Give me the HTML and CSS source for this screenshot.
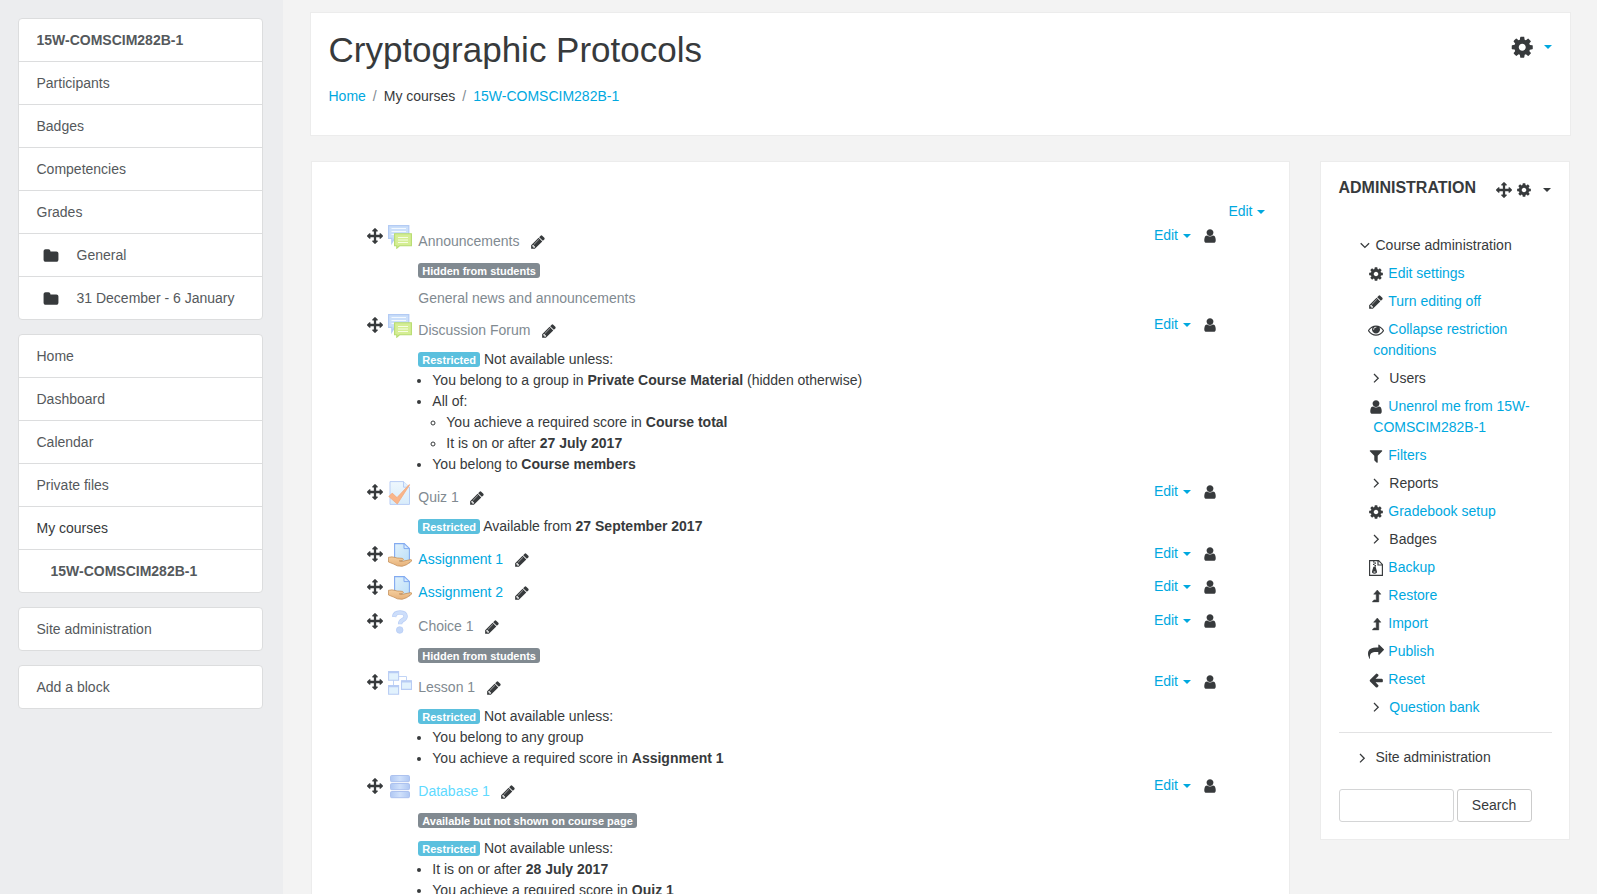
FILE: index.html
```html
<!DOCTYPE html>
<html lang="en">
<head>
  <meta charset="UTF-8">
  <title>Course: Cryptographic Protocols</title>
  <link rel="stylesheet" href="styles.css">
</head>
<body>

<!-- Icon sprite -->
<svg class="sprite" width="0" height="0">
  <defs>
    <linearGradient id="g-blue" x1="0" y1="0" x2="1" y2="1">
      <stop offset="0" stop-color="#e0f1fc"/>
      <stop offset="1" stop-color="#bcdff8"/>
    </linearGradient>
    <linearGradient id="g-pale" x1="0" y1="0" x2="0" y2="1">
      <stop offset="0" stop-color="#eef7fd"/>
      <stop offset="1" stop-color="#d8ecfb"/>
    </linearGradient>
    <linearGradient id="g-db" x1="0" y1="0" x2="1" y2="0">
      <stop offset="0" stop-color="#b0c8f3"/>
      <stop offset=".5" stop-color="#d0e1fb"/>
      <stop offset="1" stop-color="#b0c8f3"/>
    </linearGradient>
    <linearGradient id="g-hand" x1="0" y1="0" x2="0" y2="1">
      <stop offset="0" stop-color="#f5cf9f"/>
      <stop offset="1" stop-color="#e6b17a"/>
    </linearGradient>
  </defs>
  <symbol id="i-cog" viewBox="0 0 1792 1792"><path d="M1152 896q0-106-75-181t-181-75-181 75-75 181 75 181 181 75 181-75 75-181zm512-109v222q0 12-8 23t-20 13l-185 28q-19 54-39 91 35 50 107 138 10 12 10 25t-9 23q-27 37-99 108t-94 71q-12 0-26-9l-138-108q-44 23-91 38-16 136-29 186-7 28-36 28h-222q-14 0-24.5-8.5t-11.5-21.5l-28-184q-49-16-90-37l-141 107q-10 9-25 9-14 0-25-11-126-114-165-168-7-10-7-23 0-12 8-23 15-21 51-66.5t54-70.5q-27-50-41-99l-183-27q-13-2-21-12.5t-8-23.5v-222q0-12 8-23t19-13l186-28q14-46 39-92-40-57-107-138-10-12-10-24 0-10 9-23 26-36 98.5-107.5t94.5-71.5q13 0 26 10l138 107q44-23 91-38 16-136 29-186 7-28 36-28h222q14 0 24.5 8.5t11.5 21.5l28 184q49 16 90 37l142-107q9-9 24-9 13 0 25 10 129 119 165 170 7 8 7 22 0 12-8 23-15 21-51 66.5t-54 70.5q26 50 41 98l183 28q13 2 21 12.5t8 23.5z"/></symbol>
  <symbol id="i-move" viewBox="0 0 1792 1792"><path d="M1792 896q0 26-19 45l-256 256q-19 19-45 19t-45-19-19-45v-128h-384v384h128q26 0 45 19t19 45-19 45l-256 256q-19 19-45 19t-45-19l-256-256q-19-19-19-45t19-45 45-19h128v-384h-384v128q0 26-19 45t-45 19-45-19l-256-256q-19-19-19-45t19-45l256-256q19-19 45-19t45 19 19 45v128h384v-384h-128q-26 0-45-19t-19-45 19-45l256-256q19-19 45-19t45 19l256 256q19 19 19 45t-19 45-45 19h-128v384h384v-128q0-26 19-45t45-19 45 19l256 256q19 19 19 45z"/></symbol>
  <symbol id="i-pencil" viewBox="0 0 1792 1792"><path d="M491 1536l91-91-235-235-91 91v107h128v128h107zm523-928q0-22-22-22-10 0-17 7l-542 542q-7 7-7 17 0 22 22 22 10 0 17-7l542-542q7-7 7-17zm-54-192l416 416-832 832h-416v-416zm683 96q0 53-37 90l-166 166-416-416 166-165q36-38 90-38 53 0 91 38l235 234q37 39 37 91z"/></symbol>
  <symbol id="i-user" viewBox="0 0 1792 1792"><path d="M1536 1399q0 109-62.5 187t-150.5 78h-854q-88 0-150.5-78t-62.5-187q0-85 8.5-160.5t31.5-152 58.5-131 94-89 134.5-34.5q131 128 313 128t313-128q76 0 134.5 34.5t94 89 58.5 131 31.5 152 8.5 160.5zm-256-887q0 159-112.5 271.5t-271.5 112.5-271.5-112.5-112.5-271.5 112.5-271.5 271.5-112.5 271.5 112.5 112.5 271.5z"/></symbol>
  <symbol id="i-folder" viewBox="0 0 1792 1792"><path d="M1728 608v704q0 92-66 158t-158 66h-1216q-92 0-158-66t-66-158v-960q0-92 66-158t158-66h320q92 0 158 66t66 158v32h672q92 0 158 66t66 158z"/></symbol>
  <symbol id="i-eye" viewBox="0 0 1792 1792"><path d="M1664 960q-152-236-381-353 61 104 61 225 0 185-131.5 316.5t-316.5 131.5-316.5-131.5-131.5-316.5q0-121 61-225-229 117-381 353 133 205 333.5 326.5t434.5 121.5 434.5-121.5 333.5-326.5zm-720-384q0-20-14-34t-34-14q-125 0-214.5 89.5t-89.5 214.5q0 20 14 34t34 14 34-14 14-34q0-86 61-147t147-61q20 0 34-14t14-34zm848 384q0 34-20 69-140 230-376.5 368.5t-499.5 138.5-499.5-139-376.5-368q-20-35-20-69t20-69q140-229 376.5-368t499.5-139 499.5 139 376.5 368q20 35 20 69z"/></symbol>
  <symbol id="i-filter" viewBox="0 0 1792 1792"><path d="M1595 295q17 41-14 70l-493 493v742q0 42-39 59-13 5-25 5-27 0-45-19l-256-256q-19-19-19-45v-486l-493-493q-31-29-14-70 17-39 59-39h1280q42 0 59 39z"/></symbol>
  <symbol id="i-share" viewBox="0 0 1792 1792"><path d="M1792 640q0 26-19 45l-512 512q-19 19-45 19t-45-19-19-45v-256h-224q-98 0-175.5 6t-154 21.5-133 42.5-105.5 69.5-80 101-48.5 138.5-17.5 181q0 55 5 123 0 6 2.5 23.5t2.5 26.5q0 15-8.5 25t-23.5 10q-16 0-28-17-7-9-13-22t-13.5-30-10.5-24q-127-285-127-451 0-199 53-333 162-403 875-403h224v-256q0-26 19-45t45-19 45 19l512 512q19 19 19 45z"/></symbol>
  <symbol id="i-left" viewBox="0 0 1792 1792"><path d="M1664 896v128q0 53-32.5 90.5t-84.5 37.5h-704l293 294q38 36 38 90t-38 90l-75 76q-37 37-90 37-52 0-91-37l-651-652q-37-37-37-90 0-52 37-91l651-650q38-38 91-38 52 0 90 38l75 74q38 38 38 91t-38 91l-293 293h704q52 0 84.5 37.5t32.5 90.5z"/></symbol>
  <symbol id="i-up" viewBox="0 0 16 16"><path d="M9.300 2L12.900 6.200H10.800V13.900H4.300L5.900 11.900H8.200V6.200H5.700z" stroke="#373a3c" stroke-width=".5" stroke-linejoin="round"/></symbol>
  <symbol id="i-zip" viewBox="0 0 16 16"><path d="M1.600 .6h9l3.800 3.800v11h-12.800z M10 .8v4.200h4.400" fill="none" stroke="#373a3c" stroke-width="1.150"/><path d="M5 1.200h1.500v1.300H5zM6.500 2.500H8v1.300H6.500zM5 3.800h1.500v1.300H5zM6.500 5.100H8v1.300H6.500zM5.400 6.800h2.200l1.400 4.800q.3 2.100-2.500 2.100t-2.500-2.100zM5.600 11.500v1.100h1.800v-1.100z" fill-rule="evenodd"/></symbol>
  <symbol id="i-right" viewBox="0 0 16 16"><path d="M6 4l4.200 4.200L6 12.400" fill="none" stroke="#373a3c" stroke-width="1.300"/></symbol>
  <symbol id="i-down" viewBox="0 0 16 16"><path d="M3.700 5.200l4.200 4.200 4.200-4.200" fill="none" stroke="#373a3c" stroke-width="1.300"/></symbol>

  <!-- activity icons -->
  <symbol id="m-forum" viewBox="0 0 24 24">
    <path d="M.6.6h20.200v12.800H6.400v.1L3.800 18v-4.600H.6z" fill="#cbdffa" stroke="#b3cbf4" stroke-width="1.200"/>
    <path d="M3.500 3.500h14.500M3.500 6.500h14.500M3.500 9.500h4" stroke="#f3f9ff" stroke-width="1.200"/>
    <path d="M6.600 8.800h16.800v12H11.500L8.800 23.200v-2.400H6.600z" fill="#d5ee94" stroke="#b6dc70" stroke-width="1.100"/>
    <path d="M10 12.500h10M10 15h10M10 17.500h10" stroke="#f6fde3" stroke-width="1.100"/>
  </symbol>
  <symbol id="m-quiz" viewBox="0 0 24 24">
    <path d="M2 .6h13.500l6 5.600v17.200H2z" fill="url(#g-pale)" stroke="#b8cdf5" stroke-width="1"/>
    <path d="M15.500.6v5.600h6" fill="#e3f1fd" stroke="#b8cdf5"/>
    <path d="M.8 15.500l3.400-3.400 4.800 4.500L21.200 3.500l.4.4L9.300 23z" fill="#f9b58a" stroke="#f3a679" stroke-width=".7"/>
  </symbol>
  <symbol id="m-assign" viewBox="0 0 24 24">
    <path d="M6.600.6h9.600l5.200 5v14H6.600z" fill="url(#g-blue)" stroke="#82aaf0" stroke-width="1.100"/>
    <path d="M16 .6v5h5.400z" fill="#d6eafd" stroke="#82aaf0"/>
    <path d="M.5 14.300q3.500-.9 6.500.1 2 .8 4.300.7 3.900-.1 4.200 1.300 0 1.200-4.300 1.500l1.800.7 9.700-2q1.800.2.700 1.700-4.500 4-9.200 5-5 .3-8.500-2.200L.5 19z" fill="url(#g-hand)" stroke="#c08850" stroke-width=".7"/>
  </symbol>
  <symbol id="m-choice" viewBox="0 0 24 24">
    <path d="M6.100 6.900Q6.600 2.400 12 2.400q5.400.2 5.600 3.800 0 2.400-3.100 4-2.400 1.200-2.400 4" fill="none" stroke="#b9cef6" stroke-width="4.400"/>
    <path d="M6.300 6.400Q6.900 2.500 12 2.400q5.400.2 5.600 3.800 0 2.400-3.100 4-2.400 1.200-2.400 3.600" fill="none" stroke="#cddefa" stroke-width="3"/>
    <circle cx="11.700" cy="20" r="3.300" fill="#c4d7f8" stroke="#b9cef6" stroke-width=".8"/>
  </symbol>
  <symbol id="m-lesson" viewBox="0 0 24 24">
    <path d="M11 5.500h7.500V10M5.500 9v6" fill="none" stroke="#c1d4f6" stroke-width="1"/>
    <g fill="#e2f2fd" stroke="#b8ccf4" stroke-width="1.100">
      <path d="M.6.6h10v8.600H.6zM13.500 9.800h10v8.600h-10zM.6 14.600h10v8.600H.6z"/>
    </g>
    <path d="M.6 1.300h10M13.500 10.500h10M.6 15.300h10" stroke="#b8ccf4" stroke-width="1.800"/>
  </symbol>
  <symbol id="m-data" viewBox="0 0 24 24">
    <g fill="url(#g-db)" stroke="#adc2ef" stroke-width="1">
      <rect x="2.500" y=".5" width="19" height="6.200" rx="1.200"/>
      <rect x="2.500" y="8.500" width="19" height="6.200" rx="1.200"/>
      <rect x="2.500" y="16.500" width="19" height="6.200" rx="1.200"/>
    </g>
  </symbol>
</svg>

<div class="page">

  <!-- Nav drawer -->
  <nav class="drawer">
    <div class="list-group">
      <a class="list-item bold">15W-COMSCIM282B-1</a>
      <a class="list-item">Participants</a>
      <a class="list-item">Badges</a>
      <a class="list-item">Competencies</a>
      <a class="list-item">Grades</a>
      <a class="list-item with-icon"><svg class="icon"><use href="#i-folder"/></svg>General</a>
      <a class="list-item with-icon"><svg class="icon"><use href="#i-folder"/></svg>31 December - 6 January</a>
    </div>
    <div class="list-group">
      <a class="list-item">Home</a>
      <a class="list-item">Dashboard</a>
      <a class="list-item">Calendar</a>
      <a class="list-item">Private files</a>
      <div class="list-item dark">My courses</div>
      <a class="list-item bold indent">15W-COMSCIM282B-1</a>
    </div>
    <div class="list-group">
      <a class="list-item">Site administration</a>
    </div>
    <div class="list-group">
      <a class="list-item">Add a block</a>
    </div>
  </nav>

  <div class="content">

    <header class="card page-header">
      <div>
        <h1>Cryptographic Protocols</h1>
        <ol class="breadcrumb">
          <li><a class="link">Home</a></li>
          <li>My courses</li>
          <li><a class="link">15W-COMSCIM282B-1</a></li>
        </ol>
      </div>
      <div class="header-menu"><svg class="icon icon-lg"><use href="#i-cog"/></svg><span class="caret link"></span></div>
    </header>

    <div class="columns">

      <main class="card course">
        <div class="section-edit"><a class="link menu">Edit<span class="caret"></span></a></div>

        <div class="activity">
          <svg class="icon move"><use href="#i-move"/></svg>
          <svg class="mod-icon"><use href="#m-forum"/></svg>
          <div class="body">
            <div class="title dimmed">Announcements<svg class="icon"><use href="#i-pencil"/></svg></div>
            <div class="info"><span class="tag">Hidden from students</span></div>
            <div class="dimmed summary">General news and announcements</div>
          </div>
          <div class="actions"><a class="link menu">Edit<span class="caret"></span></a><svg class="icon"><use href="#i-user"/></svg></div>
        </div>

        <div class="activity">
          <svg class="icon move"><use href="#i-move"/></svg>
          <svg class="mod-icon"><use href="#m-forum"/></svg>
          <div class="body">
            <div class="title dimmed">Discussion Forum<svg class="icon"><use href="#i-pencil"/></svg></div>
            <div class="info"><span class="tag tag-info">Restricted</span> Not available unless:
              <ul>
                <li>You belong to a group in <strong>Private Course Material</strong> (hidden otherwise)</li>
                <li>All of:
                  <ul>
                    <li>You achieve a required score in <strong>Course total</strong></li>
                    <li>It is on or after <strong>27 July 2017</strong></li>
                  </ul>
                </li>
                <li>You belong to <strong>Course members</strong></li>
              </ul>
            </div>
          </div>
          <div class="actions"><a class="link menu">Edit<span class="caret"></span></a><svg class="icon"><use href="#i-user"/></svg></div>
        </div>

        <div class="activity">
          <svg class="icon move"><use href="#i-move"/></svg>
          <svg class="mod-icon"><use href="#m-quiz"/></svg>
          <div class="body">
            <div class="title dimmed">Quiz 1<svg class="icon"><use href="#i-pencil"/></svg></div>
            <div class="info"><span class="tag tag-info">Restricted</span> Available from <strong>27 September 2017</strong></div>
          </div>
          <div class="actions"><a class="link menu">Edit<span class="caret"></span></a><svg class="icon"><use href="#i-user"/></svg></div>
        </div>

        <div class="activity">
          <svg class="icon move"><use href="#i-move"/></svg>
          <svg class="mod-icon"><use href="#m-assign"/></svg>
          <div class="body">
            <div class="title link">Assignment 1<svg class="icon"><use href="#i-pencil"/></svg></div>
          </div>
          <div class="actions"><a class="link menu">Edit<span class="caret"></span></a><svg class="icon"><use href="#i-user"/></svg></div>
        </div>

        <div class="activity loose">
          <svg class="icon move"><use href="#i-move"/></svg>
          <svg class="mod-icon"><use href="#m-assign"/></svg>
          <div class="body">
            <div class="title link">Assignment 2<svg class="icon"><use href="#i-pencil"/></svg></div>
          </div>
          <div class="actions"><a class="link menu">Edit<span class="caret"></span></a><svg class="icon"><use href="#i-user"/></svg></div>
        </div>

        <div class="activity tight">
          <svg class="icon move"><use href="#i-move"/></svg>
          <svg class="mod-icon"><use href="#m-choice"/></svg>
          <div class="body">
            <div class="title dimmed">Choice 1<svg class="icon"><use href="#i-pencil"/></svg></div>
            <div class="info"><span class="tag">Hidden from students</span></div>
          </div>
          <div class="actions"><a class="link menu">Edit<span class="caret"></span></a><svg class="icon"><use href="#i-user"/></svg></div>
        </div>

        <div class="activity">
          <svg class="icon move"><use href="#i-move"/></svg>
          <svg class="mod-icon"><use href="#m-lesson"/></svg>
          <div class="body">
            <div class="title dimmed">Lesson 1<svg class="icon"><use href="#i-pencil"/></svg></div>
            <div class="info"><span class="tag tag-info">Restricted</span> Not available unless:
              <ul>
                <li>You belong to any group</li>
                <li>You achieve a required score in <strong>Assignment 1</strong></li>
              </ul>
            </div>
          </div>
          <div class="actions"><a class="link menu">Edit<span class="caret"></span></a><svg class="icon"><use href="#i-user"/></svg></div>
        </div>

        <div class="activity">
          <svg class="icon move"><use href="#i-move"/></svg>
          <svg class="mod-icon"><use href="#m-data"/></svg>
          <div class="body">
            <div class="title link-dimmed">Database 1<svg class="icon"><use href="#i-pencil"/></svg></div>
            <div class="info"><span class="tag">Available but not shown on course page</span></div>
            <div class="summary"><span class="tag tag-info">Restricted</span> Not available unless:
              <ul>
                <li>It is on or after <strong>28 July 2017</strong></li>
                <li>You achieve a required score in <strong>Quiz 1</strong></li>
              </ul>
            </div>
          </div>
          <div class="actions"><a class="link menu">Edit<span class="caret"></span></a><svg class="icon"><use href="#i-user"/></svg></div>
        </div>
      </main>

      <!-- Administration block -->
      <aside class="card block">
        <div class="block-head">
          <h2>Administration</h2>
          <div class="block-menu">
            <svg class="icon"><use href="#i-move"/></svg>
            <svg class="icon"><use href="#i-cog"/></svg>
            <span class="caret"></span>
          </div>
        </div>

        <div class="tree-root"><svg class="icon"><use href="#i-down"/></svg>Course administration</div>
        <ul class="tree">
          <li class="link"><svg class="icon"><use href="#i-cog"/></svg>Edit settings</li>
          <li class="link"><svg class="icon"><use href="#i-pencil"/></svg>Turn editing off</li>
          <li class="link"><svg class="icon"><use href="#i-eye"/></svg>Collapse restriction conditions</li>
          <li class="branch"><svg class="icon"><use href="#i-right"/></svg>Users</li>
          <li class="link"><svg class="icon"><use href="#i-user"/></svg>Unenrol me from 15W-COMSCIM282B-1</li>
          <li class="link"><svg class="icon"><use href="#i-filter"/></svg>Filters</li>
          <li class="branch"><svg class="icon"><use href="#i-right"/></svg>Reports</li>
          <li class="link"><svg class="icon"><use href="#i-cog"/></svg>Gradebook setup</li>
          <li class="branch"><svg class="icon"><use href="#i-right"/></svg>Badges</li>
          <li class="link"><svg class="icon"><use href="#i-zip"/></svg>Backup</li>
          <li class="link"><svg class="icon"><use href="#i-up"/></svg>Restore</li>
          <li class="link"><svg class="icon"><use href="#i-up"/></svg>Import</li>
          <li class="link"><svg class="icon"><use href="#i-share"/></svg>Publish</li>
          <li class="link"><svg class="icon"><use href="#i-left"/></svg>Reset</li>
          <li class="branch link"><svg class="icon"><use href="#i-right"/></svg>Question bank</li>
        </ul>
        <hr>
        <div class="tree-root site"><svg class="icon"><use href="#i-right"/></svg>Site administration</div>
        <form class="search">
          <input type="text">
          <button type="button">Search</button>
        </form>
      </aside>

    </div>
  </div>
</div>

</body>
</html>
```
FILE: styles.css
```css
* {
  box-sizing: border-box;
}

body {
  margin: 0;
  height: 894px;
  overflow: hidden;
  background: #f3f3f3;
  color: #373a3c;
  font-family: "Liberation Sans", Arial, sans-serif;
  font-size: 14px;
  line-height: 21px;
}

h1, h2, ul, ol {
  margin: 0;
  padding: 0;
}

.sprite {
  display: block;
}

.page {
  display: flex;
  height: 894px;
}

.link {
  color: #00a8df;
}

.link-dimmed {
  color: #60daff;
}

.dimmed {
  color: #818a91;
}

.icon {
  width: 16px;
  height: 16px;
  fill: #373a3c;
  flex: none;
}

.caret {
  display: inline-block;
  border: 4px solid transparent;
  border-top-color: currentColor;
  border-bottom: 0;
}

.card {
  background: #fff;
  border: 1px solid #ececec;
}

/* Nav drawer */
.drawer {
  flex: none;
  width: 283px;
  padding: 18px 20px 0 18px;
  background: #ecedef;
}

.list-group {
  margin-bottom: 14px;
  background: #fff;
  border: 1px solid #dcddde;
  border-radius: 4px;
}

.list-item {
  display: flex;
  align-items: center;
  height: 43px;
  padding-left: 17.5px;
  border-top: 1px solid #dcddde;
  color: #55595c;
}

.list-item:first-child {
  height: 42px;
  border-top: 0;
}

.bold {
  font-weight: bold;
}

.dark {
  color: #373a3c;
}

.indent {
  padding-left: 31.5px;
}

.with-icon {
  padding-left: 24px;
}

.with-icon .icon {
  margin: 2px 17.5px 0 0;
}

/* Header */
.content {
  flex: 1;
  padding: 12px 26px 0 27px;
}

.page-header {
  display: flex;
  justify-content: space-between;
  height: 124px;
  padding: 17px 18px 0 17.5px;
}

h1 {
  font-size: 35px;
  font-weight: normal;
  line-height: 39px;
}

.breadcrumb {
  display: flex;
  margin-top: 17px;
  list-style: none;
}

.breadcrumb li + li::before {
  content: "/";
  padding: 0 7px;
  color: #818a91;
}

.header-menu {
  display: flex;
  align-items: center;
  gap: 9.5px;
  height: 34px;
}

.icon-lg {
  width: 24.5px;
  height: 24.5px;
}

.columns {
  display: flex;
  align-items: flex-start;
  justify-content: space-between;
  margin-top: 25px;
  padding: 0 1px;
}

/* Course content */
.course {
  width: 979px;
  height: 760px;
  padding: 39px 71px 0 55px;
}

.menu .caret {
  margin-left: 4.5px;
  vertical-align: 2px;
}

.section-edit {
  margin-right: -47px;
  text-align: right;
}

.activity {
  display: flex;
  margin-bottom: 6px;
}

.section-edit + .activity {
  margin-top: 3px;
  margin-bottom: 5px;
}

.loose {
  margin-bottom: 7px;
}

.tight {
  margin-bottom: 5px;
}

.move {
  margin: 3px 5px 0 0;
}

.mod-icon {
  flex: none;
  width: 24px;
  height: 24px;
}

.body {
  flex: 1;
  padding: 6px 0 0 6.3px;
}

.title {
  display: flex;
}

.title .icon {
  margin: 3px 0 0 10.5px;
}

.info {
  margin-top: 8px;
}

.summary {
  margin-top: 7px;
}

.info ul, .summary ul {
  padding-left: 14px;
}

.tag {
  display: inline-block;
  height: 15px;
  padding: 0 4px;
  border-radius: 3px;
  background: #818a91;
  color: #fff;
  font-size: 11px;
  font-weight: bold;
  line-height: 16px;
}

.tag-info {
  background: #5bc0de;
}

.actions {
  display: flex;
  align-items: flex-start;
}

.actions .icon {
  margin: 3px 0 0 11.5px;
}

/* Blocks */
.block {
  width: 250px;
  height: 679px;
  padding: 14px 17px 0 17.5px;
}

.block-head {
  display: flex;
  justify-content: space-between;
  padding-right: 1px;
}

.block h2 {
  font-size: 16px;
  line-height: 24px;
  text-transform: uppercase;
}

.block-menu {
  display: flex;
  align-items: center;
  gap: 4px;
  height: 28px;
}

.block-menu .caret {
  margin-left: 7px;
}

.tree-root {
  display: flex;
  align-items: center;
  gap: 3px;
  margin-top: 31px;
  padding-left: 18px;
}

.tree {
  padding: 3px 0 0 34.8px;
  list-style: none;
}

.tree li {
  padding: 4px 0 3px;
}

.tree .icon {
  margin: 0 4px -4px -5px;
  vertical-align: baseline;
}

.tree .branch .icon {
  margin-right: 5px;
  margin-bottom: -3px;
}

hr {
  margin: 11px 0 0;
  border: 0;
  border-top: 1px solid #e2e2e3;
}

.site {
  margin-top: 14px;
  padding-left: 15.5px;
  gap: 5.5px;
}

.search {
  display: flex;
  gap: 3px;
  margin-top: 21px;
}

.search input,
.search button {
  height: 33px;
  border: 1px solid #d4d5d6;
  border-radius: 3px;
  background: #fff;
}

.search input {
  width: 115px;
}

.search button {
  width: 75px;
  padding: 0;
  border-color: #ccc;
  color: #373a3c;
  font: inherit;
}
```
